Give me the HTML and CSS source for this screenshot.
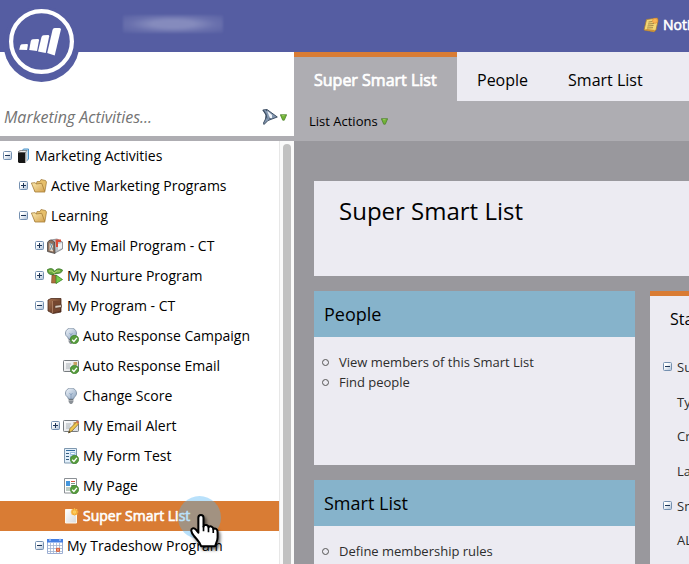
FILE: index.html
```html
<!DOCTYPE html>
<html lang="en">
<head>
<meta charset="utf-8">
<title>Super Smart List</title>
<link rel="stylesheet" href="styles.css">
</head>
<body>
<svg class="defs" width="0" height="0">
  <defs>
    <linearGradient id="box" x2="1" y2="1"><stop offset=".3" stop-color="#fff"/><stop offset="1" stop-color="#a9bdd5"/></linearGradient>
    <linearGradient id="gold" x2="1" y2="1"><stop stop-color="#fbeab0"/><stop offset="1" stop-color="#d3a04b"/></linearGradient>
    <linearGradient id="glass" x2="1" y2="1"><stop stop-color="#f4f8fd"/><stop offset="1" stop-color="#8da5c0"/></linearGradient>
    <linearGradient id="brown" x2="1" y2="1"><stop stop-color="#a87250"/><stop offset="1" stop-color="#4c2919"/></linearGradient>
    <linearGradient id="paper" x2="1" y2="1"><stop stop-color="#fff"/><stop offset="1" stop-color="#d7d9dc"/></linearGradient>
    <symbol id="minus" viewBox="0 0 9 9"><rect x=".5" y=".5" width="8" height="8" rx="1" fill="url(#box)" stroke="#7590b0"/><path d="M2 4.5h5" stroke="#1d3557"/></symbol>
    <symbol id="plus" viewBox="0 0 9 9"><rect x=".5" y=".5" width="8" height="8" rx="1" fill="url(#box)" stroke="#7590b0"/><path d="M2 4.5h5M4.5 2v5" stroke="#1d3557"/></symbol>
    <symbol id="check" viewBox="0 0 9 9"><circle cx="4.5" cy="4.5" r="4.2" fill="#579c3c" stroke="#347a25" stroke-width=".6"/><path d="M2.2 4.7l1.700 1.700 3-3.500" fill="none" stroke="#fff" stroke-width="1.400"/></symbol>
    <symbol id="books" viewBox="0 0 16 16"><path d="M7 3l1.500-2H13.500v10l-2 2" fill="#b9def5" stroke="#4b91c7"/><path d="M3 4l2-1.500h7L10 5z" fill="#eee" stroke="#555" stroke-width=".6"/><path d="M3 4.500h7.500V15H4l-1-1z" fill="#151515"/><path d="M10.500 5L12 3v10l-1.500 2z" fill="#ccc"/></symbol>
    <symbol id="folder" viewBox="0 0 16 16"><path d="M3.500 13L6 3.500h3l1-2 4.500 1L15.500 4l-1.500 9z" fill="#e6bf6b" stroke="#9c7632" stroke-width=".7"/><path d="M.4 5l3.800-.3 1 1.300 5.500-.7 3.300 8.700H4z" fill="url(#gold)" stroke="#a67e38" stroke-width=".8"/></symbol>
    <symbol id="mailbox" viewBox="0 0 16 16"><path d="M4 2l6-1 5.500 3v7L8 15z" fill="#bac0c6" stroke="#75797e" stroke-width=".7"/><path d="M.5 4.500Q3-.2 7.500 4L8 15.500l-7.500-2z" fill="#8d6f5c" stroke="#494748" stroke-width=".8"/><path d="M2.500 5l3.500 1.500v7l-3.500-1z" fill="#e9d8c5"/><path d="M3 5l3 7M6 5l-3 7" stroke="#5686a5" stroke-width=".8"/><path d="M8.500 1.500h5.500v2.500h-3v5H9z" fill="#d84a35"/><path d="M11 6l4-1v5l-4 2z" fill="#eef0f2"/></symbol>
    <symbol id="palm" viewBox="0 0 16 16"><path d="M5 7h4l1 8H4.500z" fill="#ad703d" stroke="#7a4926" stroke-width=".6"/><path d="M7 6.500Q0 7.500 .5 1.500 6-1 7.500 3.500 10-1 15.500 2 15 6 8 5.500z" fill="#68a93e" stroke="#39762a" stroke-width=".8"/><path d="M2 3q3-1 5 2 3-3 6-2" fill="none" stroke="#b7d877"/><path d="M9 7l6.500 4.500L9 15.500z" fill="#78cf4d" stroke="#398723" stroke-width=".8"/></symbol>
    <symbol id="wallet" viewBox="0 0 16 16"><path d="M1 2l3-1.500H14v13.500l-8 1.500-5-2.500z" fill="url(#brown)" stroke="#4d2b1d" stroke-width=".8"/><path d="M6 3h7v10l-7 1.500z" fill="#754730"/><path d="M5.500 3v12" stroke="#b98d70" stroke-width=".7"/><path d="M8 7.500l6.500-.7v2.500l-6.500 1z" fill="#d9ccc0" stroke="#4c3021" stroke-width=".6"/></symbol>
    <symbol id="bulb" viewBox="0 0 16 16"><path d="M5.500 11Q5 9 3 7.500A5.500 5.300 0 1 1 13 7.500Q10.800 9 10.500 11z" fill="url(#glass)" stroke="#7c8da2" stroke-width=".9"/><path d="M6.500 5l1.500 2 1.500-2M8 7v4" fill="none" stroke="#7894b5" stroke-width=".7"/><path d="M5.700 11h4.600v3L9 15.700H7L5.700 14z" fill="#6d747b"/><path d="M5.700 12.500h4.600M6 14h4" stroke="#d2d5d8" stroke-width=".6"/></symbol>
    <symbol id="letter" viewBox="0 0 16 16"><rect x=".5" y="2.500" width="15" height="11" rx=".8" fill="url(#paper)" stroke="#777c80"/><path d="M3 6h5M3 8h4M3 10h5" stroke="#9ba2a8" stroke-width=".8"/><path d="M10.500 4h3.500v3h-3.500z" fill="#c9a162"/></symbol>
    <symbol id="pencil" viewBox="0 0 16 16"><path d="M5.500 15l1.500-4.500 7-7 2 2-7 7.500z" fill="#efc74b" stroke="#856b31" stroke-width=".8"/><path d="M13 4l1.300-1.600 1.700 1.800L15 6z" fill="#d56e55"/><path d="M5.500 15l.6-2 1.500 1.300z" fill="#333"/></symbol>
    <symbol id="form" viewBox="0 0 16 16"><path d="M1.500 .5h12v14.500h-12z" fill="#e2effa" stroke="#7f98af"/><path d="M3 2.500h9" stroke="#346c9e"/><path d="M3 5.500h3M3 8.500h3M3 11.500h3" stroke="#365f82"/><path d="M7.500 4.500H12v2H7.500zM7.500 8H12v2H7.500z" fill="#fff" stroke="#75a8d5" stroke-width=".7"/></symbol>
    <symbol id="page" viewBox="0 0 16 16"><path d="M1.500 .5h12v14.500h-12z" fill="#fff" stroke="#8b9095"/><path d="M3 3h4v5H3z" fill="#4395dc"/><path d="M8 3.500h4" stroke="#d65942"/><path d="M8 5.500h4M8 7.500h4M3 10h4M3 12h4" stroke="#7c9a86"/></symbol>
    <symbol id="newdoc" viewBox="0 0 16 16"><path d="M2.500 1.500h11v13.500H2.500z" fill="url(#paper)" stroke="#fff8ec"/><circle cx="11.500" cy="4" r="3.300" fill="#f5a931"/><circle cx="11.500" cy="4" r="1.500" fill="#ffdf72"/><path d="M11.500 0v8M7.500 4h8M8.700 1.200l5.600 5.600M14.300 1.200L8.700 6.800" stroke="#f9c65b" stroke-width=".6"/></symbol>
    <symbol id="calendar" viewBox="0 0 16 16"><path d="M.5 2h15v13.500H.5z" fill="#fff" stroke="#9caed3"/><path d="M0 1h16v3.500H0z" fill="#457fe2"/><path d="M3 0v3M13 0v3" stroke="#d6e4fb"/><path d="M3.500 5v10M6.500 5v10M9.500 5v10M12.500 5v10M1 7.500h14M1 10.500h14M1 13.500h14" stroke="#9fb2d1" stroke-width=".8"/><path d="M9.500 10.300h3v3h-3z" fill="#f6a17b" stroke="#d85b37"/></symbol>
    <symbol id="drop" viewBox="0 0 7 7"><path d="M.3 .7h6.400L4.300 6.200H2.700z" fill="#71b237" stroke="#487e28" stroke-width=".7"/><path d="M2 1.700h2.500" stroke="#a5d768" stroke-width=".8"/></symbol>
  </defs>
</svg>

<header class="topbar">
  <span class="account"></span>
  <a class="notices"><svg class="icon" viewBox="0 0 16 16"><path d="M3.500 2.500L14.500 1 15 4l-2 9-2 1.800L1 13z" fill="#f3d675" stroke="#a47932" stroke-width=".8"/><path d="M1 13l3-1 8 1-1 1.800z" fill="#cc9138"/><path d="M5.500 5l4-.5M5 7l6-.5M4.500 9l6-.5M4 11l6-.3" stroke="#8f743d" stroke-width=".8"/><circle cx="12" cy="3.800" r="2.500" fill="#f8b554" stroke="#e78f35" stroke-width=".7"/></svg><span>Notifications</span></a>
  <svg class="logo" viewBox="0 0 76 76"><circle cx="37.500" cy="38" r="38" fill="#555da2"/><circle cx="37.500" cy="35.500" r="30.400" fill="none" stroke="#fff" stroke-width="4.200"/><g fill="#fff"><path d="M16.300 39.500q.5-1.200 2-1.300l4.600-.3q1.200 0 1 1.200L23.100 44l-7.900-.3z"/><path d="M26.800 35q.4-1.500 2-1.700l5-.3q1.400 0 1.200 1.200L33 45l-7.800-.9z"/><path d="M37.500 31q.5-1.500 2-1.700l4.500-.3q1.400 0 1.200 1.300L41.700 47l-7.700-1.600z"/><path d="M48.500 24q.5-1.700 2.200-1.900l4.800-.2q1.700 0 1.400 1.500L50.700 49.600l-7.500-2.500z"/></g></svg>
</header>

<div class="workspace">
  <aside class="sidebar">
    <div class="search">
      <span class="search-label">Marketing Activities...</span>
      <svg class="filter" viewBox="0 0 16 16"><path d="M.8 1l4.200-.5L15.300 8 6 11.500 2 15.500 1.500 14 3.500 10 4 6z" fill="#8498b1" stroke="#324358" stroke-width=".9"/><path d="M1.500 1.500q3 2.500 3.500 8M4 1q4 2 4 9" fill="none" stroke="#324358" stroke-width=".8"/><path d="M5 1.500l5 4.500v3L7.800 9z" fill="#f1f5fa"/></svg>
      <svg class="drop"><use href="#drop"/></svg>
    </div>
    <div class="tree-wrap">
      <ul class="tree">
        <li class="l0"><svg class="toggle"><use href="#minus"/></svg><svg class="icon"><use href="#books"/></svg><span>Marketing Activities</span></li>
        <li class="l1"><svg class="toggle"><use href="#plus"/></svg><svg class="icon"><use href="#folder"/></svg><span>Active Marketing Programs</span></li>
        <li class="l1"><svg class="toggle"><use href="#minus"/></svg><svg class="icon"><use href="#folder"/></svg><span>Learning</span></li>
        <li class="l2"><svg class="toggle"><use href="#plus"/></svg><svg class="icon"><use href="#mailbox"/></svg><span>My Email Program - CT</span></li>
        <li class="l2"><svg class="toggle"><use href="#plus"/></svg><svg class="icon"><use href="#palm"/></svg><span>My Nurture Program</span></li>
        <li class="l2"><svg class="toggle"><use href="#minus"/></svg><svg class="icon"><use href="#wallet"/></svg><span>My Program - CT</span></li>
        <li class="l3"><svg class="toggle"></svg><svg class="icon"><use href="#bulb"/><use href="#check" x="7" y="7" width="9" height="9"/></svg><span>Auto Response Campaign</span></li>
        <li class="l3"><svg class="toggle"></svg><svg class="icon"><use href="#letter"/><use href="#check" x="7" y="7" width="9" height="9"/></svg><span>Auto Response Email</span></li>
        <li class="l3"><svg class="toggle"></svg><svg class="icon"><use href="#bulb"/></svg><span>Change Score</span></li>
        <li class="l3"><svg class="toggle"><use href="#plus"/></svg><svg class="icon"><use href="#letter"/><use href="#pencil"/></svg><span>My Email Alert</span></li>
        <li class="l3"><svg class="toggle"></svg><svg class="icon"><use href="#form"/><use href="#check" x="7" y="7" width="9" height="9"/></svg><span>My Form Test</span></li>
        <li class="l3"><svg class="toggle"></svg><svg class="icon"><use href="#page"/><use href="#check" x="7" y="7" width="9" height="9"/></svg><span>My Page</span></li>
        <li class="l3 selected"><svg class="toggle"></svg><svg class="icon"><use href="#newdoc"/></svg><span>Super Smart List</span></li>
        <li class="l2 last"><svg class="toggle"><use href="#minus"/></svg><svg class="icon"><use href="#calendar"/></svg><span>My Tradeshow Program</span></li>
      </ul>
      <div class="scrollbar"><div class="thumb"></div></div>
    </div>
  </aside>

  <main class="main">
    <nav class="tabs"><a class="tab active">Super Smart List</a><a class="tab">People</a><a class="tab">Smart List</a></nav>
    <div class="toolbar"><span>List Actions</span><svg class="drop"><use href="#drop"/></svg></div>
    <div class="content">
      <section class="hero"><h1>Super Smart List</h1></section>
      <div class="columns">
        <div class="cards">
          <section class="card"><h2>People</h2><ul><li>View members of this Smart List</li><li>Find people</li></ul></section>
          <section class="card"><h2>Smart List</h2><ul><li>Define membership rules</li></ul></section>
        </div>
        <section class="stats">
          <h3>Stats</h3>
          <div class="stat"><svg class="toggle"><use href="#minus"/></svg><span>Summary</span></div>
          <div class="stat sub"><span>Type</span></div>
          <div class="stat sub"><span>Created</span></div>
          <div class="stat sub"><span>Last</span></div>
          <div class="stat"><svg class="toggle"><use href="#minus"/></svg><span>Smart List</span></div>
          <div class="stat sub"><span>ALL</span></div>
        </section>
      </div>
    </div>
  </main>
</div>

<svg class="pointer" viewBox="0 0 50 62">
  <circle cx="21.500" cy="21.500" r="21.500" fill="#4fb4f5" fill-opacity=".4"/>
  <g transform="translate(1.500 2) scale(.92 .9)">
    <path class="hand" d="M20.500 22q0-3 2.800-3t2.800 3v10q.5-2.500 3-2t2.400 2.800q1.200-2 3.300-1t1.900 3q1.400-1.600 3.200-.3t1.500 3.500v6q0 3-1.500 6l-1.200 3.500H23.500l-2-4q-2-3-5.500-7-3-4-3.200-6t1.500-2.700 3.800 1.700l2.400 3z" fill="#fff" stroke="#000" stroke-width="2.200" stroke-linejoin="round"/>
    <path d="M26.100 31v6M31.500 33v5M36.700 35v4" stroke="#000" stroke-width="1.800"/>
  </g>
</svg>
</body>
</html>
```

FILE: styles.css
```css
* { box-sizing: border-box; }
body {
  margin: 0;
  width: 689px;
  height: 564px;
  overflow: hidden;
  position: relative;
  font-family: "Open Sans", "Noto Sans", sans-serif;
  font-size: 14px;
  color: #000;
  background: #fff;
}
ul, h1, h2, h3 { margin: 0; padding: 0; font-weight: 400; }
ul { list-style: none; }
svg { display: block; flex: none; }
.defs { position: absolute; }
.icon { width: 16px; height: 16px; overflow: visible; }
.toggle { width: 9px; height: 9px; }
.drop { width: 7px; height: 7px; }

.topbar {
  position: relative;
  height: 52px;
  background: #555da2;
  display: flex;
  justify-content: space-between;
  padding-left: 123px;
}
.account {
  width: 100px;
  height: 18px;
  margin-top: 15px;
  background: radial-gradient(ellipse at center, #858bbd 30%, #6970ad 62%, #5961a4 100%);
  filter: blur(1px);
}
.notices {
  width: 46px;
  display: flex;
  align-items: center;
  gap: 4px;
  padding-bottom: 3px;
  color: #fff;
  -webkit-text-stroke: .6px #fff;
  white-space: nowrap;
  overflow: hidden;
}
.logo { position: absolute; left: 4px; top: 6px; width: 76px; height: 76px; overflow: visible; }

.workspace { display: flex; height: 512px; overflow: hidden; }
.sidebar { width: 294px; flex: none; display: flex; flex-direction: column; }
.search {
  height: 89px;
  border-bottom: 5px solid #aeadb2;
  display: flex;
  align-items: flex-end;
  padding: 0 7px 9px 4px;
}
.search-label { flex: 1; font-size: 16px; line-height: 20px; font-style: italic; color: #737373; letter-spacing: -.03px; }
.filter { width: 16px; height: 16px; margin: 0 2px 2px 0; }
.search .drop { margin-bottom: 6px; }
.tree-wrap { flex: 1; display: flex; min-height: 0; overflow: hidden; }
.tree { width: 279px; }
.tree li { height: 30px; padding-bottom: 1px; display: flex; align-items: center; white-space: nowrap; }
.tree li span { margin-left: 4px; padding-bottom: 1px; }
.tree .icon { margin-left: 3px; }
.tree .l0 { padding-left: 3px; }
.tree .l1 { padding-left: 19px; }
.tree .l2 { padding-left: 35px; }
.tree .l3 { padding-left: 51px; }
.tree .selected { background: #d97c34; color: #fff; -webkit-text-stroke: .6px #fff; }
.scrollbar { width: 15px; background: #fafafa; border-left: 1px solid #e7e7e7; padding: 3px 3px 0; }
.thumb { height: 440px; border-radius: 4px; background: #c1c1c1; }

.main { flex: 1; min-width: 0; background: #99989d; display: flex; flex-direction: column; overflow: hidden; }
.tabs { height: 49px; flex: none; display: flex; background: #ecebf2; font-size: 16px; }
.tab { padding: 17px 20px 0; line-height: 22px; white-space: nowrap; }
.tab.active { width: 163px; border-top: 5px solid #d97c34; padding-top: 12px; background: #aeadb2; color: #fff; -webkit-text-stroke: .7px #fff; }
.toolbar { height: 40px; flex: none; background: #aeadb2; display: flex; align-items: center; gap: 3px; padding-left: 15px; font-size: 13px; }
.content { flex: 1; min-height: 0; padding: 40px 0 0 20px; }
.hero { height: 95px; background: #ecebf2; padding: 13px 25px; }
.hero h1 { font-size: 24px; line-height: 34px; }
.columns { display: flex; gap: 15px; margin-top: 15px; }
.cards { width: 321px; flex: none; display: flex; flex-direction: column; gap: 15px; }
.card { height: 174px; background: #ecebf2; }
.card h2 { height: 46px; line-height: 46px; padding-left: 10px; font-size: 18px; background: #86b3cb; }
.card ul { padding: 15px 0 0 8px; font-size: 13px; line-height: 20px; color: #2d2d2d; }
.card li { display: flex; align-items: center; gap: 10px; }
.card li::before { content: ""; box-sizing: border-box; width: 7px; height: 7px; border: 1.500px solid #555; border-radius: 50%; }
.stats { flex: 1; min-width: 0; overflow: hidden; border-top: 5px solid #d97c34; background: #ecebf2; }
.stats h3 { font-size: 16px; line-height: 22px; padding: 12px 0 19.500px 20px; }
.stat { height: 34.700px; display: flex; align-items: center; gap: 5px; padding-left: 13px; font-size: 13px; color: #2d2d2d; white-space: nowrap; }
.stat.sub { padding-left: 27px; }

.pointer { position: absolute; left: 178px; top: 496px; width: 50px; height: 62px; overflow: visible; }
.hand { filter: drop-shadow(2px 3px 2px rgba(0, 0, 0, .55)); }
```
